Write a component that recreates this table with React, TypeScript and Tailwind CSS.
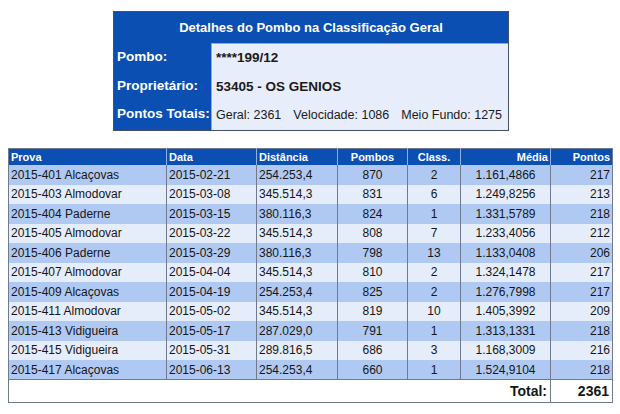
const rows = [
  ['2015-401 Alcaçovas', '2015-02-21', '254.253,4', '870', '2', '1.161,4866', '217'],
  ['2015-403 Almodovar', '2015-03-08', '345.514,3', '831', '6', '1.249,8256', '213'],
  ['2015-404 Paderne', '2015-03-15', '380.116,3', '824', '1', '1.331,5789', '218'],
  ['2015-405 Almodovar', '2015-03-22', '345.514,3', '808', '7', '1.233,4056', '212'],
  ['2015-406 Paderne', '2015-03-29', '380.116,3', '798', '13', '1.133,0408', '206'],
  ['2015-407 Almodovar', '2015-04-04', '345.514,3', '810', '2', '1.324,1478', '217'],
  ['2015-409 Alcaçovas', '2015-04-19', '254.253,4', '825', '2', '1.276,7998', '217'],
  ['2015-411 Almodovar', '2015-05-02', '345.514,3', '819', '10', '1.405,3992', '209'],
  ['2015-413 Vidigueira', '2015-05-17', '287.029,0', '791', '1', '1.313,1331', '218'],
  ['2015-415 Vidigueira', '2015-05-31', '289.816,5', '686', '3', '1.168,3009', '216'],
  ['2015-417 Alcaçovas', '2015-06-13', '254.253,4', '660', '1', '1.524,9104', '218'],
];

const font = { fontFamily: '"Liberation Sans", Arial, sans-serif' };

export default function App() {
  return (
    <div className="w-[620px] h-[414px] bg-white overflow-hidden" style={font}>
      {/* Pigeon details box */}
      <div className="pt-[11px] flex justify-center pl-[2px]">
        <div className="w-[396px] border border-[#44506a] bg-[#0b4fb3]">
          <div className="h-[31px] flex items-center justify-center text-white font-bold text-[13px]">
            Detalhes do Pombo na Classificação Geral
          </div>
          <div className="flex">
            <div className="w-[97px] flex flex-col text-white font-bold text-[13.5px] pl-[3px]">
              <div className="h-[28.5px] flex items-center">Pombo:</div>
              <div className="h-[28.5px] flex items-center">Proprietário:</div>
              <div className="h-[28.5px] flex items-center">Pontos Totais:</div>
            </div>
            <div className="flex-1 bg-[#e7edfa] border-t border-l border-[#9aa6bd] flex flex-col text-[13.5px] text-[#1a1a1a] pl-[4px]">
              <div className="h-[28.5px] flex items-center font-bold">****199/12</div>
              <div className="h-[28.5px] flex items-center font-bold">53405 - OS GENIOS</div>
              <div className="h-[28.5px] flex items-center gap-[12px] whitespace-nowrap text-[12.5px]">
                <span>Geral: 2361</span>
                <span>Velocidade: 1086</span>
                <span>Meio Fundo: 1275</span>
              </div>
            </div>
          </div>
        </div>
      </div>

      {/* Results table */}
      <div className="pl-[8px] pt-[17px]">
        <table className="border-collapse border border-[#6f7a8e] text-[12px] text-[#161616] table-fixed w-[604px]">
          <colgroup>
            <col className="w-[158px]" />
            <col className="w-[90px]" />
            <col className="w-[81px]" />
            <col className="w-[70px]" />
            <col className="w-[53px]" />
            <col className="w-[90px]" />
            <col className="w-[62px]" />
          </colgroup>
          <thead>
            <tr className="h-[16px] bg-[#0b4fb3] text-white font-bold text-[11px]">
              <th className="text-left px-[2px] border-r border-[#8fb0e6] font-bold">Prova</th>
              <th className="text-left px-[2px] border-r border-[#8fb0e6] font-bold">Data</th>
              <th className="text-left px-[2px] border-r border-[#8fb0e6] font-bold">Distância</th>
              <th className="text-center border-r border-[#8fb0e6] font-bold">Pombos</th>
              <th className="text-center border-r border-[#8fb0e6] font-bold">Class.</th>
              <th className="text-right px-[2px] border-r border-[#8fb0e6] font-bold">Média</th>
              <th className="text-right px-[2px] font-bold">Pontos</th>
            </tr>
          </thead>
          <tbody>
            {rows.map((r, i) => (
              <tr key={i} className={`h-[19.5px] ${i % 2 === 0 ? 'bg-[#b0c9f3]' : 'bg-[#e5ecfa]'}`}>
                <td className="px-[2px] border-r border-[#6f7a8e]">{r[0]}</td>
                <td className="px-[2px] border-r border-[#6f7a8e]">{r[1]}</td>
                <td className="px-[2px] border-r border-[#6f7a8e]">{r[2]}</td>
                <td className="text-center border-r border-[#6f7a8e]">{r[3]}</td>
                <td className="text-center border-r border-[#6f7a8e]">{r[4]}</td>
                <td className="text-center border-r border-[#6f7a8e]">{r[5]}</td>
                <td className="text-right px-[2px]">{r[6]}</td>
              </tr>
            ))}
            <tr className="h-[23px] bg-white border-t border-[#6f7a8e] font-bold text-[14px]">
              <td colSpan={6} className="text-right px-[3px] border-r border-[#6f7a8e]">Total:</td>
              <td className="text-right px-[3px]">2361</td>
            </tr>
          </tbody>
        </table>
      </div>
    </div>
  );
}
